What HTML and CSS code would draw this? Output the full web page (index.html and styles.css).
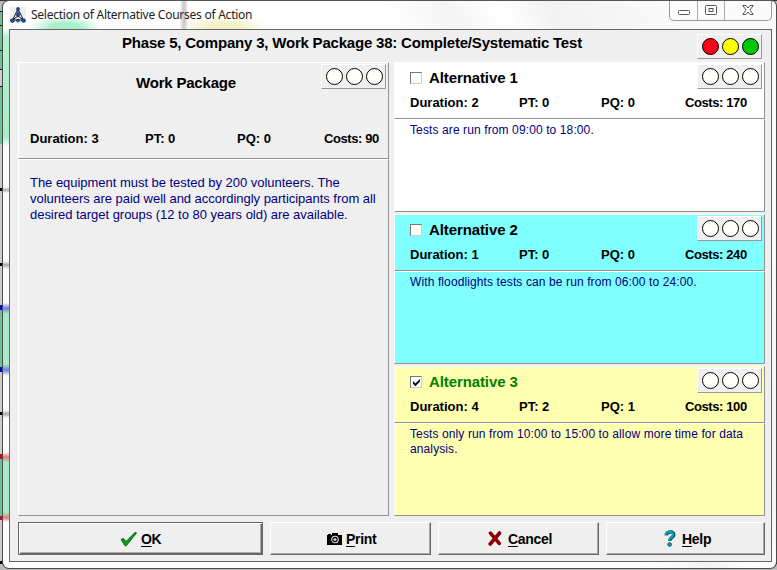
FILE: index.html
```html
<!DOCTYPE html>
<html lang="en">
<head>
<meta charset="utf-8">
<title>Selection of Alternative Courses of Action</title>
<link rel="stylesheet" href="styles.css">
</head>
<body>
<div class="window">
  <header class="titlebar">
    <svg class="appicon" width="16" height="16" viewBox="0 0 16 16">
      <rect width="16" height="16" fill="#f0f0f0"/>
      <path d="M8 2L2.5 13H13.5ZM8 2V9L2.5 13M8 9L13.5 13" fill="none" stroke="#111" stroke-width="1"/>
      <g fill="#1458c8" stroke="#03153c" stroke-width=".6"><circle cx="8" cy="1.9" r="1.5"/><circle cx="8" cy="7.6" r="1.7"/><ellipse cx="2.4" cy="13.6" rx="2" ry="1.8"/><ellipse cx="8" cy="13.6" rx="1.6" ry="1.3"/><ellipse cx="13.6" cy="13.6" rx="2" ry="1.8"/></g>
    </svg>
    <span class="caption">Selection of Alternative Courses of Action</span>
    <div class="winbtns">
      <i><svg width="14" height="12"><rect x="1.5" y="6.5" width="11" height="4" rx="1" fill="#fff" stroke="#55555f"/></svg></i>
      <i><svg width="14" height="12"><rect x="1.5" y="1.5" width="11" height="9" rx="1" fill="#fff" stroke="#55555f"/><rect x="5" y="4.5" width="4" height="3" fill="#fff" stroke="#55555f"/></svg></i>
      <i><svg width="14" height="12"><path d="M1.8 1.5H5L7 4L9 1.5H12.2L9 6L12.2 10.5H9L7 8L5 10.5H1.8L5 6Z" fill="#fff" stroke="#55555f"/></svg></i>
    </div>
  </header>
  <main class="client">
    <div class="heading">
      <h1>Phase 5, Company 3, Work Package 38: Complete/Systematic Test</h1>
      <div class="lights signal"><b></b><b></b><b></b></div>
    </div>
    <div class="columns">
      <section class="panel work">
        <div class="head">
          <div class="name"><h2>Work Package</h2><div class="lights"><b></b><b></b><b></b></div></div>
          <div class="stats"><span>Duration: 3</span><span>PT: 0</span><span>PQ: 0</span><span>Costs: 90</span></div>
        </div>
        <div class="body"><p>The equipment must be tested by 200 volunteers. The<br>volunteers are paid well and accordingly participants from all<br>desired target groups (12 to 80 years old) are available.</p></div>
      </section>
      <div class="alternatives">
        <section class="panel alt">
          <div class="head">
            <div class="name"><span class="check"></span><h2>Alternative 1</h2><div class="lights"><b></b><b></b><b></b></div></div>
            <div class="stats"><span>Duration: 2</span><span>PT: 0</span><span>PQ: 0</span><span>Costs: 170</span></div>
          </div>
          <div class="body"><p>Tests are run from 09:00 to 18:00.</p></div>
        </section>
        <section class="panel alt cyan">
          <div class="head">
            <div class="name"><span class="check"></span><h2>Alternative 2</h2><div class="lights"><b></b><b></b><b></b></div></div>
            <div class="stats"><span>Duration: 1</span><span>PT: 0</span><span>PQ: 0</span><span>Costs: 240</span></div>
          </div>
          <div class="body"><p>With floodlights tests can be run from 06:00 to 24:00.</p></div>
        </section>
        <section class="panel alt yellow">
          <div class="head">
            <div class="name"><span class="check"><svg width="9" height="9"><path d="M1 3V5.8L3.4 8.2L8 3.6V1L3.4 5.4Z" fill="#000"/></svg></span><h2>Alternative 3</h2><div class="lights"><b></b><b></b><b></b></div></div>
            <div class="stats"><span>Duration: 4</span><span>PT: 2</span><span>PQ: 1</span><span>Costs: 100</span></div>
          </div>
          <div class="body"><p>Tests only run from 10:00 to 15:00 to allow more time for data<br>analysis.</p></div>
        </section>
      </div>
    </div>
    <footer class="buttons">
      <button class="ok"><svg width="17" height="16"><path d="M1 8.5L3.5 7.5L6 10.5L15.5 1L16.5 2L6.2 14.8H5Z" fill="#00a010" stroke="#064a0c" stroke-width=".8"/></svg><span><u>O</u>K</span></button>
      <button class="print"><svg width="15" height="12"><path d="M0 2H1V1H4V2H5V0H11V2H15V12H0Z" fill="#000"/><circle cx="8" cy="6.5" r="3.3" fill="#000" stroke="#ddd" stroke-width="1.1"/><circle cx="8" cy="6.5" r="1.6" fill="#ccc"/></svg><span><u>P</u>rint</span></button>
      <button class="cancel"><svg width="14" height="15"><path d="M2.5 2.2L11.2 12.4M11.6 2L2.2 13" stroke="#8b0000" stroke-width="3.6" stroke-linecap="round"/></svg><span><u>C</u>ancel</span></button>
      <button class="help"><svg width="12" height="17"><path d="M2.2 5.4C2.4 1 10 .8 9.8 4.8C9.6 7.4 5.8 7.6 5.6 11" fill="none" stroke="#053e48" stroke-width="3.4"/><path d="M1.8 5C2 .9 9.3 .9 9.2 4.6C9 7.1 5.4 7.2 5.2 10.7" fill="none" stroke="#08a4b4" stroke-width="2.3"/><circle cx="5.6" cy="14.5" r="1.9" fill="#08a4b4" stroke="#053e48" stroke-width=".7"/></svg><span><u>H</u>elp</span></button>
    </footer>
  </main>
</div>
</body>
</html>
```
FILE: styles.css
```css
* { box-sizing: border-box; }
body {
  margin: 0; height: 570px; overflow: hidden; padding-left: 2px;
  font-family: "Liberation Sans", Arial, sans-serif;
  background: linear-gradient(#333 0 1px, #b9b9b9 1px 11px, #111 11px 12px, #6cc197 12px 25px, #111 25px 26px, #6cc197 26px 50px, #111 50px 51px, #6cc197 51px 69px, #111 69px 70px, #ccc 70px 86px, #111 86px 87px, #6cc197 87px 144px, #ccc 144px 188px, #000 188px 191px, #ccc 191px 263px, #000 263px 266px, #ccc 266px 305px, #00d 305px 310px, #6cc197 310px 367px, #00d 367px 372px, #ccc 372px 412px, #000 412px 415px, #ccc 415px 454px, #d00010 454px 459px, #6cc197 459px 516px, #d00010 516px 520px, #ccc 520px 561px, #000 561px 564px, #bbb 564px);
}
.window {
  width: 775px; height: 569px; padding: 0 5px 0 6px;
  border: 1px solid #4c4c4c; border-top-color: #555; border-radius: 7px 6px 7px 7px;
  background:
    linear-gradient(transparent 0 26px, #b5f2d2 36px, #a9ebc8 136px, #fff 146px 186px, #aaa 189px, #fff 192px 260px, #aaa 264px, #fff 268px 302px, #7181e0 307px, #a9ebc8 313px 363px, #7181e0 369px, #fff 375px 409px, #aaa 413px, #fff 417px 451px, #dd8078 456px, #a9ebc8 461px 511px, #dd8078 517px, #fff 521px) 0 0 / 6px 100% no-repeat,
    radial-gradient(ellipse 36px 12px at 62px 27px, #a9efcb 40%, transparent) no-repeat,
    radial-gradient(ellipse 44px 12px at 220px 27px, #f3f0c8 40%, transparent) no-repeat,
    linear-gradient(90deg, transparent 177px, #ccc 180px 182px, transparent 185px) 0 0 / 100% 28px no-repeat,
    linear-gradient(65deg, #fff 0 62%, #f4f4f4 68%, #fff 73%, #f2f2f2 78%, #fafafa 90%);
}
.titlebar { height: 28px; display: flex; align-items: flex-start; }
.appicon { margin: 6px 0 0 1px; }
.caption { margin: 6px 0 0 5px; font: 12px/16px "Noto Sans", "Open Sans", sans-serif; letter-spacing: -.25px; white-space: nowrap; color: #222; }
.winbtns { margin-left: auto; margin-right: -1px; display: flex; width: 103px; height: 20px; border: 1px solid #999; border-top: 0; border-radius: 0 0 5px 5px; background: #fbfbfb; }
.winbtns i { width: 28px; padding: 3px 0 0 7px; border-right: 1px solid #aaa; display: block; line-height: 0; }
.winbtns i:nth-child(2) { width: 27px; padding-left: 6px; }
.winbtns i:last-child { width: 46px; padding-left: 16px; border: 0; }
.client { width: 763px; height: 533px; border: 1px solid #666; background: #efefef; padding: 0 6px 6px 8px; display: flex; flex-direction: column; }
.heading { height: 33px; display: flex; }
h1, h2 { margin: 0; font-weight: bold; white-space: nowrap; color: #000; }
h1 { font-size: 15px; line-height: 17px; margin: 4px 0 0 104px; letter-spacing: -.2px; }
.lights { width: 65px; height: 25px; margin: 1px 2px 0 auto; display: flex; gap: 3px; padding: 3px 0 0 4px; background: #efefef; border: 1px solid; border-color: #fff #999 #999 #fff; flex: none; }
.lights b { width: 17px; height: 17px; border: 1px solid #000; border-radius: 50%; background: #fffefa; }
.heading .signal { margin: 4px 3px 0 auto; }
.signal b:nth-child(1) { background: #ff0018; }
.signal b:nth-child(2) { background: #ff0; }
.signal b:nth-child(3) { background: #00c800; }
.columns { display: flex; gap: 5px; height: 454px; }
.panel { width: 371px; display: flex; flex-direction: column; }
.head, .body { border: 1px solid; border-color: #fff #929292 #929292 #fff; }
.work .head { height: 97px; }
.body { flex: 1; }
.name { display: flex; height: 26px; }
h2 { font-size: 15px; line-height: 16px; letter-spacing: -.1px; }
.work h2 { margin: 12px 0 0 117px; letter-spacing: -.2px; }
.stats { display: grid; font-size: 13px; line-height: 14px; font-weight: bold; white-space: nowrap; color: #000; }
.stats span:last-child { letter-spacing: -.4px; }
.work .stats { grid-template-columns: 115px 92px 87px auto; margin: 43px 0 0 11px; }
.body p { margin: 15px 0 0 11px; font-size: 13px; line-height: 16px; letter-spacing: -.03px; color: #000080; white-space: nowrap; }
.alternatives { display: flex; flex-direction: column; gap: 2px; }
.alt { height: 150px; background: #fff; }
.cyan { background: #80ffff; }
.yellow { background: #ffffb0; }
.yellow h2 { color: #008000; }
.alt .head { height: 57px; }
.alt h2 { margin: 7px 0 0 7px; }
.check { width: 12px; height: 12px; margin: 9px 0 0 15px; background: #fff; border: 1px solid; border-color: #777 #ccc #ccc #777; line-height: 0; padding: 1px 0 0 1px; }
.alt .stats { grid-template-columns: 109px 82px 84px auto; margin: 7px 0 0 15px; }
.alt .body p { margin: 3px 0 0 15px; font-size: 12px; line-height: 15px; letter-spacing: .11px; }
.buttons { display: flex; gap: 7px; margin-top: 6px; }
button { height: 33px; padding: 0 0 0 56px; display: flex; align-items: center; gap: 4px; background: #efefef; border: 1px solid; border-color: #fff #666 #666 #fff; box-shadow: inset -1px -1px #aaa; font: bold 14px/17px "Liberation Sans", sans-serif; letter-spacing: -.3px; color: #000; text-align: left; }
button svg { flex: none; }
button span { position: relative; top: 1px; }
u { text-underline-offset: 2px; text-decoration-thickness: 1px; }
.ok { width: 245px; padding-left: 101px; border: 1px solid #666; box-shadow: inset 1px 1px #fff, inset -1px -1px #666, inset -2px -2px #aaa; }
.print { width: 161px; }
.cancel { width: 161px; padding-left: 49px; gap: 6px; }
.help { width: 159px; padding-left: 57px; gap: 6px; }
```
